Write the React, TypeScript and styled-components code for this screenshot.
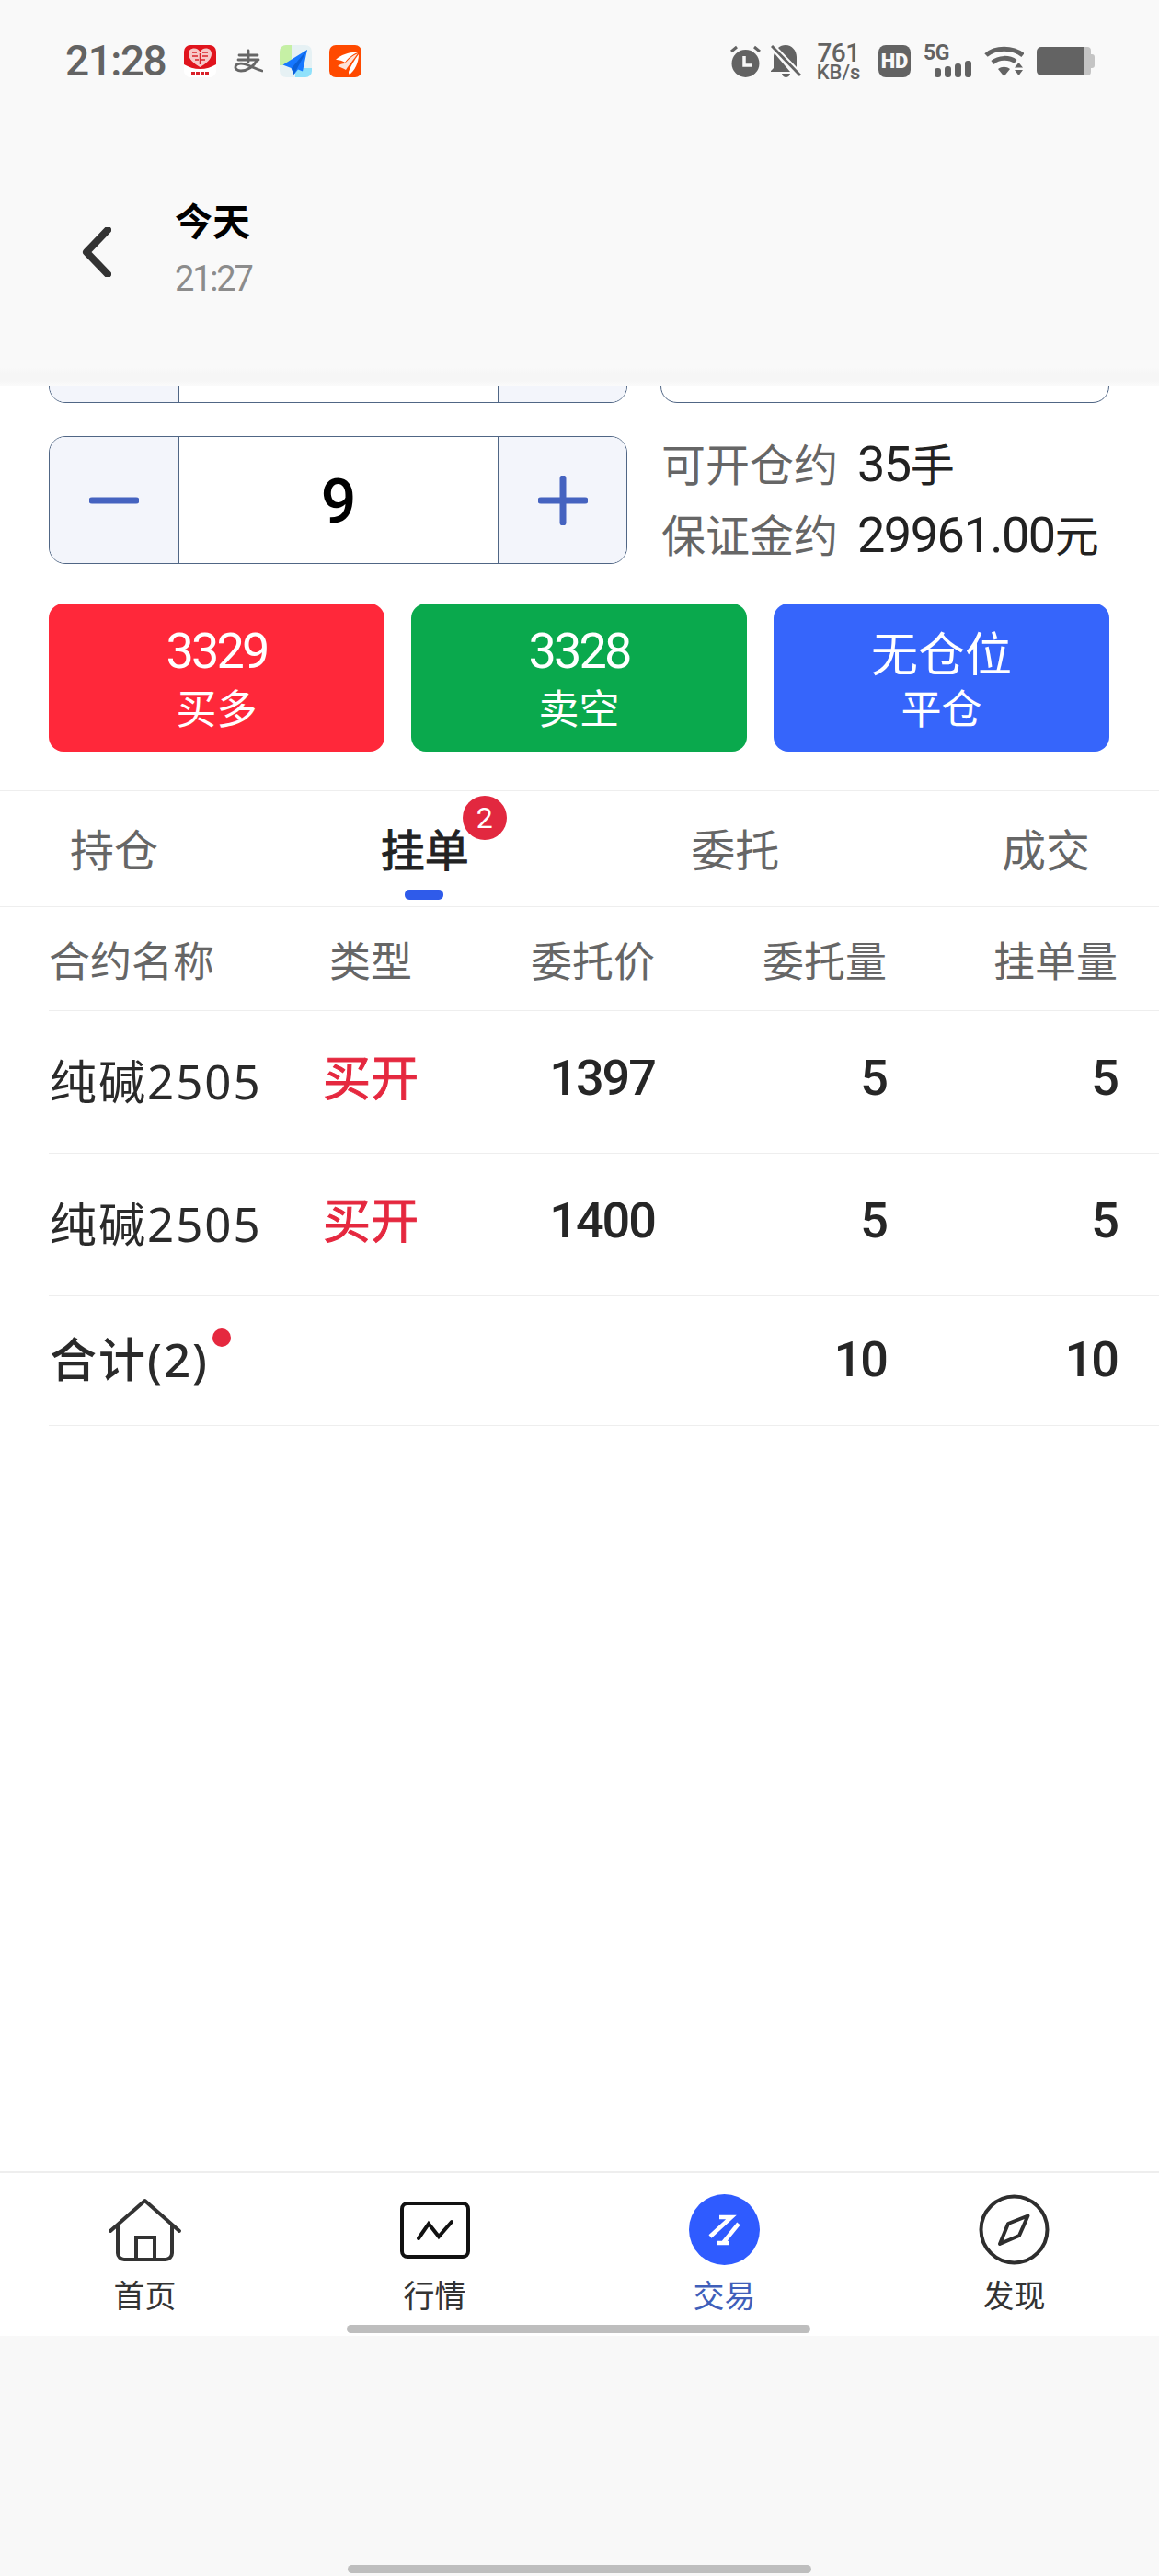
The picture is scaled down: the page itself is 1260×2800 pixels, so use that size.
import styled, { createGlobalStyle } from "styled-components";

const CJK = `"Noto Sans CJK SC", sans-serif`;
const DIGIT = `Roboto, "Noto Sans CJK SC", sans-serif`;

const GlobalStyle = createGlobalStyle`
  html, body {
    margin: 0;
    padding: 0;
    background: #f8f8f8;
  }
  * {
    box-sizing: border-box;
  }
`;

const Page = styled.div`
  width: 1260px;
  height: 2800px;
  display: flex;
  flex-direction: column;
  background: #f8f8f8;
  font-family: ${DIGIT};
  overflow: hidden;
`;

/* ---------- top bar ---------- */

const TopBar = styled.header`
  height: 420px;
  flex: none;
  overflow: hidden;
  background: linear-gradient(#f9f9f9 0 400px, #f6f6f6 406px 414px, #fafafa 418px);
`;

const StatusBar = styled.div`
  height: 41px;
  margin-top: 46px;
  padding: 0 70px 0 71px;
  display: flex;
  align-items: center;
  justify-content: space-between;
`;

const StatusGroup = styled.div<{ $gap: number }>`
  display: flex;
  align-items: center;
  gap: ${(p) => p.$gap}px;
`;

const Clock = styled.span`
  width: 112px;
  font-size: 46px;
  font-weight: 500;
  letter-spacing: -1.5px;
  color: #636363;
  line-height: 41px;
`;

const Speed = styled.div`
  width: 49px;
  margin: 0 5px 0 2px;
  display: flex;
  flex-direction: column;
  align-items: center;
  color: #636363;
  font-weight: 500;
`;

const SpeedValue = styled.span`
  font-size: 28px;
  line-height: 23px;
  letter-spacing: -0.5px;
`;

const SpeedUnit = styled.span`
  font-size: 22px;
  line-height: 19px;
  white-space: nowrap;
`;

const HdBadge = styled.span`
  width: 35px;
  height: 35px;
  border-radius: 8px;
  background: #636363;
  color: #f8f8f8;
  font-size: 22px;
  font-weight: 900;
  display: flex;
  align-items: center;
  justify-content: center;
`;

const NetworkBlock = styled.div`
  width: 52px;
  height: 35px;
  position: relative;
`;

const NetworkLabel = styled.span`
  position: absolute;
  left: 0;
  top: -2px;
  font-size: 23px;
  line-height: 22px;
  font-weight: 700;
  letter-spacing: -0.5px;
  color: #636363;
`;

const NetworkBars = styled.div`
  position: absolute;
  right: 0;
  bottom: 0;
  display: flex;
  align-items: flex-end;
  gap: 4px;
`;

const NetworkBar = styled.span<{ $h: number }>`
  width: 7px;
  height: ${(p) => p.$h}px;
  border-radius: 3px;
  background: #636363;
`;

const NavHeader = styled.div`
  padding: 126px 0 0 89px;
  display: flex;
  align-items: center;
  gap: 69px;
`;

const TitleBlock = styled.div`
  display: flex;
  flex-direction: column;
  gap: 18px;
`;

const Title = styled.span`
  font-family: ${CJK};
  font-size: 41px;
  line-height: 50px;
  font-weight: 700;
  color: #000;
`;

const Subtitle = styled.span`
  font-size: 38px;
  line-height: 44px;
  letter-spacing: -2.2px;
  color: #8c8c8c;
`;

/* ---------- trade form ---------- */

const Content = styled.main`
  flex: 1;
  background: #fff;
  display: flex;
  flex-direction: column;
  overflow: hidden;
`;

const Form = styled.section`
  padding: 0 54px 0 53px;
  display: flex;
  flex-direction: column;
`;

const ClippedRow = styled.div`
  height: 18px;
  overflow: hidden;
  display: flex;
  align-items: flex-end;
  gap: 36px;
`;

const StepperRow = styled.div`
  height: 139px;
  margin-top: 36px;
  display: flex;
  align-items: center;
  gap: 37px;
`;

const Stepper = styled.div`
  width: 629px;
  height: 139px;
  flex: none;
  display: grid;
  grid-template-columns: 140px 1fr 139px;
  border: 1px solid #506685;
  border-radius: 18px;
  overflow: hidden;
`;

const StepButton = styled.div`
  background: #f3f5fb;
  display: flex;
  align-items: center;
  justify-content: center;
`;

const StepValue = styled.div`
  padding-top: 4px;
  border-left: 1px solid #506685;
  border-right: 1px solid #506685;
  display: flex;
  align-items: center;
  justify-content: center;
  font-size: 68px;
  font-weight: 500;
  color: #000;
`;

const EmptyInput = styled.div`
  width: 488px;
  height: 139px;
  flex: none;
  border: 1px solid #506685;
  border-radius: 18px;
`;

const InfoList = styled.div`
  padding-bottom: 6px;
  display: flex;
  flex-direction: column;
`;

const InfoRow = styled.div`
  height: 77px;
  display: flex;
  align-items: center;
  gap: 21px;
`;

const InfoLabel = styled.span`
  font-family: ${CJK};
  font-size: 48px;
  color: #666;
`;

const InfoValue = styled.span`
  font-size: 54px;
  letter-spacing: -1.5px;
  color: #222;

  & > em {
    font-family: ${CJK};
    font-style: normal;
    font-size: 48px;
    letter-spacing: 0;
  }
`;

const ActionRow = styled.div`
  margin-top: 43px;
  display: grid;
  grid-template-columns: repeat(3, 365px);
  justify-content: space-between;
`;

const ActionButton = styled.div<{ $bg: string }>`
  height: 161px;
  border-radius: 16px;
  background: ${(p) => p.$bg};
  color: #fff;
  display: flex;
  flex-direction: column;
  align-items: center;
  padding-top: 22px;
`;

const ActionTop = styled.span<{ $cjk?: boolean }>`
  height: 60px;
  line-height: 60px;
  font-family: ${(p) => (p.$cjk ? CJK : DIGIT)};
  font-size: ${(p) => (p.$cjk ? 51 : 54)}px;
  letter-spacing: ${(p) => (p.$cjk ? 0 : -2.8)}px;
`;

const ActionBottom = styled.span`
  margin-top: 2px;
  line-height: 56px;
  font-family: ${CJK};
  font-size: 44px;
`;

/* ---------- tabs ---------- */

const Tabs = styled.nav`
  margin-top: 42px;
  height: 127px;
  flex: none;
  border-top: 1.5px solid #eee;
  border-bottom: 1.5px solid #eee;
  padding: 0 75px 4px 76px;
  display: flex;
  align-items: center;
  justify-content: space-between;
`;

const Tab = styled.div<{ $active?: boolean }>`
  position: relative;
  font-family: ${CJK};
  font-size: 48px;
  line-height: 60px;
  color: ${(p) => (p.$active ? "#222" : "#666")};
  -webkit-text-stroke: ${(p) => (p.$active ? "1px #222" : "0")};
`;

const TabBadge = styled.span`
  position: absolute;
  left: 89px;
  top: -26px;
  width: 48px;
  height: 48px;
  border-radius: 50%;
  background: #e2283f;
  color: #fff;
  font-family: ${DIGIT};
  font-size: 32px;
  font-weight: 400;
  -webkit-text-stroke: 0;
  display: flex;
  align-items: center;
  justify-content: center;
`;

const TabUnderline = styled.span`
  position: absolute;
  left: 26px;
  top: 76px;
  width: 42px;
  height: 11px;
  border-radius: 5px;
  background: #2f5bea;
`;

/* ---------- table ---------- */

const Table = styled.section`
  margin-left: 53px;
  display: flex;
  flex-direction: column;
`;

const TableRow = styled.div<{ $h: number }>`
  height: ${(p) => p.$h}px;
  padding-right: 45px;
  border-bottom: 1.5px solid #eee;
  display: grid;
  grid-template-columns: 260px 180px 219px 252px 1fr;
  align-items: center;
`;

const HeadCell = styled.div<{ $align: string }>`
  font-family: ${CJK};
  font-size: 45px;
  color: #666;
  text-align: ${(p) => p.$align};
`;

const NameCell = styled.div`
  position: relative;
  padding: 0 0 6px 1px;
  font-family: "Noto Sans", ${CJK};
  font-size: 51px;
  letter-spacing: 2px;
  color: #2a2a2a;
  white-space: nowrap;
`;

const SideCell = styled.div`
  padding-bottom: 16px;
  text-align: center;
  font-family: ${CJK};
  font-size: 52px;
  color: #e5283f;
  -webkit-text-stroke: 1px #e5283f;
`;

const NumCell = styled.div<{ $total?: boolean }>`
  padding-bottom: ${(p) => (p.$total ? 4 : 10)}px;
  text-align: right;
  font-size: 54px;
  font-weight: 500;
  letter-spacing: -2px;
  color: #262626;
`;

const TotalName = styled(NameCell)`
  width: fit-content;
  font-weight: 500;
  padding-bottom: 8px;
`;

const TotalDot = styled.span`
  position: absolute;
  right: -24px;
  top: 6px;
  width: 20px;
  height: 20px;
  border-radius: 50%;
  background: #e5283f;
`;

/* ---------- bottom nav ---------- */

const BottomNav = styled.nav`
  position: relative;
  height: 179px;
  flex: none;
  background: #fff;
  border-top: 2px solid #eee;
  display: grid;
  grid-template-columns: repeat(4, 315px);
`;

const NavItem = styled.div<{ $active?: boolean }>`
  display: flex;
  flex-direction: column;
  align-items: center;
  padding-top: 23px;
  color: ${(p) => (p.$active ? "#3f5fba" : "#333")};
`;

const NavIconBox = styled.div`
  height: 77px;
  display: flex;
  align-items: center;
  justify-content: center;
`;

const NavLabel = styled.span`
  margin-top: 12px;
  font-family: ${CJK};
  font-size: 34px;
  line-height: 40px;
`;

const HomeBar = styled.span`
  display: block;
  width: 504px;
  height: 9px;
  border-radius: 5px;
  background: #bebebe;
`;

const NavHomeBar = styled(HomeBar)`
  position: absolute;
  left: 377px;
  bottom: 3px;
`;

const Footer = styled.footer`
  flex: none;
  height: 261px;
  padding-bottom: 3px;
  display: flex;
  align-items: flex-end;
  justify-content: center;
`;

/* ---------- drawings ---------- */

const PddIcon = () => (
  <svg width="35" height="35" viewBox="0 0 35 35">
    <rect width="35" height="35" rx="7" fill="#fff" />
    <path d="M0 7a7 7 0 0 1 7-7h21a7 7 0 0 1 7 7v14c-5 3-11 5-17.500 5S5 24 0 21z" fill="#e0141d" />
    <path d="M17.500 24C11 20 5 15.500 5 9.500 5 5.500 8 3.500 11 3.500c3 0 5 1.500 6.500 4 1.500-2.500 3.500-4 6.500-4 3 0 6 2 6 6 0 6-6 10.500-12.500 14.500z" fill="#f7c8c8" />
    <path d="M9 8h5M9 12h6M12 16h4M20 8h6M20 12h6M19 16h4M17.500 9v12" stroke="#d9222a" strokeWidth="1.500" fill="none" />
    <path d="M8 30.500h19" stroke="#d9222a" strokeWidth="3" strokeDasharray="4 1" />
  </svg>
);

const AlipayIcon = () => (
  <svg width="32" height="35" viewBox="0 0 32 35">
    <path
      d="M6 11h20M16 6v12M5 16h22M25 17c-3 6-10 11-17 11-4 0-6.500-2-6-4.500C2.500 20 8 19.500 13 21c6 1.800 11 5 18 7"
      stroke="#666"
      strokeWidth="2.800"
      fill="none"
      strokeLinecap="round"
    />
  </svg>
);

const PlaneIcon = () => (
  <svg width="35" height="35" viewBox="0 0 35 35">
    <rect width="35" height="35" rx="7" fill="#e6f1f4" />
    <path d="M7 0h6v22H0V7a7 7 0 0 1 7-7z" fill="#c6f0a5" />
    <path d="M17 25h18v3a7 7 0 0 1-7 7H17z" fill="#8fe1fb" />
    <path d="M30 5 3.500 21.500l9 3.500 3 7 4.500-5.500 5 2z" fill="#1677ff" />
    <path d="M30 5 13 25l2.500 7z" fill="#0b5fd6" />
  </svg>
);

const FeatherIcon = () => (
  <svg width="35" height="35" viewBox="0 0 35 35">
    <rect width="35" height="35" rx="7" fill="#ff4a00" />
    <path d="M31 8C24 7 13 10 7 16c3 0 8 1 10 3 3-5 9-9 14-11z" fill="#fff" />
    <path d="M31 9c-5 2-11 7-14 11-3 0-6 1-8 3 3 1 6 2 9 4 3-5 9-12 13-18z" fill="#fde3d8" />
    <path d="M32 10c-4 5-9 13-11 19 0 1 0 2 1 3 5-4 10-12 10-22z" fill="#fff" />
  </svg>
);

const AlarmIcon = () => (
  <svg width="35" height="35" viewBox="0 0 35 35">
    <circle cx="17.500" cy="20" r="15" fill="#636363" />
    <path d="M2 7 8 2M33 7l-6-5" stroke="#636363" strokeWidth="3" />
    <path d="M16 12v10h8" stroke="#f8f8f8" strokeWidth="3.500" fill="none" />
  </svg>
);

const BellOffIcon = () => (
  <svg width="33" height="35" viewBox="0 0 33 35">
    <path
      d="M16 0c-3 0-6 1-8 3l20 21V13C28 6 23 0 16 0zM4 9c-1 1-1 3-1 4v12l-3 3v1h21zM12 31h9c-.500 2.500-2.500 4-4.500 4S12.500 33.500 12 31z"
      fill="#636363"
    />
    <path d="M1 1 32 33" stroke="#636363" strokeWidth="3" />
  </svg>
);

const WifiIcon = () => (
  <svg width="43" height="33" viewBox="0 0 43 33">
    <path d="M2 10C12 1 31 1 42 10" stroke="#636363" strokeWidth="5" fill="none" />
    <path d="M9 18c7-6 18-6 25-1" stroke="#636363" strokeWidth="5" fill="none" />
    <path d="M15 25c4-3 9-3 13 0l-6.500 8z" fill="#636363" />
    <path d="M33 23.500 37.500 18l4.500 5.500zM33 26h9l-4.500 6z" fill="#636363" />
  </svg>
);

const BatteryIcon = () => (
  <svg width="63" height="31" viewBox="0 0 63 31">
    <path d="M51 0h4a4 4 0 0 1 4 4v4h1a3 3 0 0 1 3 3v9a3 3 0 0 1-3 3h-1v4a4 4 0 0 1-4 4h-4z" fill="#c4c4c4" />
    <path d="M5 0h46v31H5a5 5 0 0 1-5-5V5a5 5 0 0 1 5-5z" fill="#636363" />
  </svg>
);

const BackIcon = () => (
  <svg width="32" height="54" viewBox="0 0 32 54" style={{ marginTop: 10 }}>
    <path d="M28 3 5 27l23 24" stroke="#333" strokeWidth="8" fill="none" strokeLinecap="round" strokeLinejoin="round" />
  </svg>
);

const MinusIcon = () => (
  <svg width="54" height="54" viewBox="0 0 54 54">
    <path d="M3 27h48" stroke="#4563c0" strokeWidth="7" strokeLinecap="round" />
  </svg>
);

const PlusIcon = () => (
  <svg width="54" height="54" viewBox="0 0 54 54">
    <path d="M3 27h48M27 3v48" stroke="#4563c0" strokeWidth="7" strokeLinecap="round" />
  </svg>
);

const HomeIcon = () => (
  <svg width="81" height="69" viewBox="0 0 81 69">
    <path d="M3 36 40.500 3 78 36" stroke="#333" strokeWidth="4" fill="none" strokeLinecap="round" strokeLinejoin="round" />
    <path d="M11 29v31a7 7 0 0 0 7 7h45a7 7 0 0 0 7-7V29" stroke="#333" strokeWidth="4" fill="none" />
    <path d="M31 67V43h20v24" stroke="#333" strokeWidth="4" fill="none" />
  </svg>
);

const ChartIcon = () => (
  <svg width="76" height="62" viewBox="0 0 76 62">
    <rect x="2" y="2" width="72" height="58" rx="6" stroke="#111" strokeWidth="4" fill="none" />
    <path d="M20 40 31 24l11 14 14-16" stroke="#111" strokeWidth="4" fill="none" strokeLinecap="round" />
  </svg>
);

const TradeIcon = () => (
  <svg width="77" height="77" viewBox="0 0 77 77">
    <circle cx="38.500" cy="38.500" r="38.500" fill="#2f5bff" />
    <path d="M33 25h13L23 46M54 32 37 53H30h14" stroke="#fff" strokeWidth="4.500" fill="none" />
  </svg>
);

const CompassIcon = () => (
  <svg width="77" height="77" viewBox="0 0 77 77">
    <circle cx="38.500" cy="38.500" r="36" stroke="#2e2e2e" strokeWidth="4" fill="none" />
    <path d="M53.500 23.500 44 45 23 54l9-22z" stroke="#2e2e2e" strokeWidth="4" fill="none" strokeLinejoin="round" />
  </svg>
);

/* ---------- data ---------- */

const ORDERS = [
  { name: "纯碱2505", side: "买开", price: "1397", qty: "5", pending: "5" },
  { name: "纯碱2505", side: "买开", price: "1400", qty: "5", pending: "5" },
];

const NAV_ITEMS = [
  { label: "首页", icon: <HomeIcon /> },
  { label: "行情", icon: <ChartIcon /> },
  { label: "交易", icon: <TradeIcon />, active: true },
  { label: "发现", icon: <CompassIcon /> },
];

export default function App() {
  return (
    <Page>
      <GlobalStyle />
      <TopBar>
        <StatusBar>
          <StatusGroup $gap={17}>
            <Clock>21:28</Clock>
            <StatusGroup $gap={18.5}>
              <PddIcon />
              <AlipayIcon />
              <PlaneIcon />
              <FeatherIcon />
            </StatusGroup>
          </StatusGroup>
          <StatusGroup $gap={14}>
            <StatusGroup $gap={10}>
              <AlarmIcon />
              <BellOffIcon />
            </StatusGroup>
            <Speed>
              <SpeedValue>761</SpeedValue>
              <SpeedUnit>KB/s</SpeedUnit>
            </Speed>
            <HdBadge>HD</HdBadge>
            <NetworkBlock>
              <NetworkLabel>5G</NetworkLabel>
              <NetworkBars>
                <NetworkBar $h={10} />
                <NetworkBar $h={12} />
                <NetworkBar $h={15} />
                <NetworkBar $h={18} />
              </NetworkBars>
            </NetworkBlock>
            <WifiIcon />
            <BatteryIcon />
          </StatusGroup>
        </StatusBar>
        <NavHeader>
          <BackIcon />
          <TitleBlock>
            <Title>今天</Title>
            <Subtitle>21:27</Subtitle>
          </TitleBlock>
        </NavHeader>
      </TopBar>

      <Content>
        <Form>
          <ClippedRow>
            <Stepper>
              <StepButton />
              <StepValue />
              <StepButton />
            </Stepper>
            <EmptyInput />
          </ClippedRow>

          <StepperRow>
            <Stepper>
              <StepButton>
                <MinusIcon />
              </StepButton>
              <StepValue>9</StepValue>
              <StepButton>
                <PlusIcon />
              </StepButton>
            </Stepper>
            <InfoList>
              <InfoRow>
                <InfoLabel>可开仓约</InfoLabel>
                <InfoValue>
                  35<em>手</em>
                </InfoValue>
              </InfoRow>
              <InfoRow>
                <InfoLabel>保证金约</InfoLabel>
                <InfoValue>
                  29961.00<em>元</em>
                </InfoValue>
              </InfoRow>
            </InfoList>
          </StepperRow>

          <ActionRow>
            <ActionButton $bg="#ff283a">
              <ActionTop>3329</ActionTop>
              <ActionBottom>买多</ActionBottom>
            </ActionButton>
            <ActionButton $bg="#0aa94d">
              <ActionTop>3328</ActionTop>
              <ActionBottom>卖空</ActionBottom>
            </ActionButton>
            <ActionButton $bg="#3665fb">
              <ActionTop $cjk>无仓位</ActionTop>
              <ActionBottom>平仓</ActionBottom>
            </ActionButton>
          </ActionRow>
        </Form>

        <Tabs>
          <Tab>持仓</Tab>
          <Tab $active>
            挂单
            <TabBadge>2</TabBadge>
            <TabUnderline />
          </Tab>
          <Tab>委托</Tab>
          <Tab>成交</Tab>
        </Tabs>

        <Table>
          <TableRow $h={113}>
            <HeadCell $align="left">合约名称</HeadCell>
            <HeadCell $align="center">类型</HeadCell>
            <HeadCell $align="right">委托价</HeadCell>
            <HeadCell $align="right">委托量</HeadCell>
            <HeadCell $align="right">挂单量</HeadCell>
          </TableRow>
          {ORDERS.map((order) => (
            <TableRow $h={155} key={order.price}>
              <NameCell>{order.name}</NameCell>
              <SideCell>{order.side}</SideCell>
              <NumCell>{order.price}</NumCell>
              <NumCell>{order.qty}</NumCell>
              <NumCell>{order.pending}</NumCell>
            </TableRow>
          ))}
          <TableRow $h={141}>
            <TotalName>
              合计(2)
              <TotalDot />
            </TotalName>
            <span />
            <span />
            <NumCell $total>10</NumCell>
            <NumCell $total>10</NumCell>
          </TableRow>
        </Table>
      </Content>

      <BottomNav>
        {NAV_ITEMS.map((item) => (
          <NavItem key={item.label} $active={item.active}>
            <NavIconBox>{item.icon}</NavIconBox>
            <NavLabel>{item.label}</NavLabel>
          </NavItem>
        ))}
        <NavHomeBar />
      </BottomNav>

      <Footer>
        <HomeBar />
      </Footer>
    </Page>
  );
}
